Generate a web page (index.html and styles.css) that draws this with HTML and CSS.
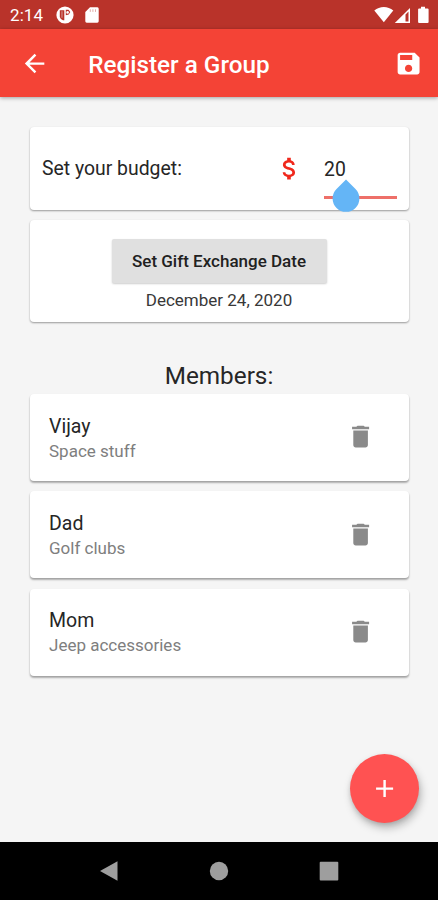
FILE: index.html
```html
<!DOCTYPE html>
<html lang="en">

<head>
    <meta charset="UTF-8" />
    <meta name="viewport" content="width=device-width, initial-scale=1.0" />
    <title>Register a Group</title>
    <link rel="stylesheet" href="styles.css">
</head>

<body>
    <div class="screen">
        <div class="status-bar">
            <span class="clock">2:14</span>
            <svg class="status-app" viewBox="0 0 18 18">
                <circle cx="9" cy="9" r="8.6" fill="#fff" />
                <path d="M3.800 4.200v6.800q.6 2.400 3.200 3.200h1.300V4.200zM9.800 3.800h2.700l1.800 2.200-1.600 2.600-2.900.6z" fill="#b9332a" />
                <path d="M5.200 5.200h1.500v6.500H5.200z" fill="#fff" opacity=".35" />
                <circle cx="11.600" cy="6.400" r="1.300" fill="#fff" />
            </svg>
            <svg class="status-sd" viewBox="0 0 14 16">
                <path d="M5 .3h7.400A1.400 1.400 0 0 1 13.700 1.700v12.600a1.400 1.400 0 0 1-1.400 1.400H1.700a1.400 1.400 0 0 1-1.400-1.400V5z" fill="#fff" />
                <path d="M5.300 2.300v2.600M7.900 2.300v2.600M10.500 2.300v2.600" stroke="#b9332a" stroke-width="1" opacity=".4" />
            </svg>
            <svg class="status-system" viewBox="0 0 56 18">
                <path d="M.3 4.500C5.600-.2 14-.2 19.300 4.500L9.800 16.300z" fill="#fff" />
                <path d="M20.800 17L36 2v15zM31.500 8.500v7h3v-10z" fill="#fff" fill-rule="evenodd" />
                <path d="M47 .8h4v1.700h2.500q1.100 0 1.100 1.100v12.300q0 1.100-1.100 1.100h-8.300q-1.100 0-1.100-1.100V3.600q0-1.100 1.100-1.100H47z" fill="#fff" />
            </svg>
        </div>

        <header class="app-bar">
            <svg class="icon" viewBox="0 0 24 24"><path d="M20 11H7.830l5.590-5.590L12 4l-8 8 8 8 1.410-1.410L7.830 13H20v-2z" /></svg>
            <h1>Register a Group</h1>
            <svg class="icon" viewBox="0 0 24 24"><path d="M17 3H5c-1.110 0-2 .9-2 2v14c0 1.100.89 2 2 2h14c1.100 0 2-.9 2-2V7l-4-4zm-5 16c-1.660 0-3-1.340-3-3s1.340-3 3-3 3 1.340 3 3-1.340 3-3 3zm3-10H5V5h10v4z" /></svg>
        </header>

        <main class="content">
            <section class="card budget">
                <span class="budget-label">Set your budget:</span>
                <svg class="icon dollar" viewBox="0 0 24 24"><path d="M11.800 10.900c-2.270-.59-3-1.200-3-2.150 0-1.090 1.010-1.850 2.700-1.850 1.780 0 2.440.85 2.500 2.100h2.210c-.07-1.720-1.120-3.300-3.210-3.810V3h-3v2.160c-1.940.42-3.500 1.680-3.500 3.610 0 2.310 1.910 3.460 4.700 4.130 2.500.6 3 1.480 3 2.410 0 .69-.49 1.790-2.700 1.790-2.060 0-2.870-.92-2.980-2.100h-2.200c.12 2.190 1.760 3.420 3.680 3.830V21h3v-2.150c1.950-.37 3.500-1.500 3.500-3.550 0-2.840-2.430-3.810-4.700-4.400z" /></svg>
                <div class="budget-field">
                    <span>20</span>
                    <svg class="cursor-handle" viewBox="0 0 28 33"><path d="M14 .5L23.500 10a13.400 13.400 0 1 1-19 0z" /></svg>
                </div>
            </section>

            <section class="card exchange">
                <button class="date-button">Set Gift Exchange Date</button>
                <p class="date">December 24, 2020</p>
            </section>

            <h2>Members:</h2>

            <div class="card member">
                <div class="member-info">
                    <h3>Vijay</h3>
                    <p>Space stuff</p>
                </div>
                <svg class="icon delete" viewBox="0 0 24 24"><path d="M6 19c0 1.100.9 2 2 2h8c1.100 0 2-.9 2-2V7H6v12zM19 4h-3.500l-1-1h-5l-1 1H5v2h14V4z" /></svg>
            </div>
            <div class="card member">
                <div class="member-info">
                    <h3>Dad</h3>
                    <p>Golf clubs</p>
                </div>
                <svg class="icon delete" viewBox="0 0 24 24"><path d="M6 19c0 1.100.9 2 2 2h8c1.100 0 2-.9 2-2V7H6v12zM19 4h-3.500l-1-1h-5l-1 1H5v2h14V4z" /></svg>
            </div>
            <div class="card member">
                <div class="member-info">
                    <h3>Mom</h3>
                    <p>Jeep accessories</p>
                </div>
                <svg class="icon delete" viewBox="0 0 24 24"><path d="M6 19c0 1.100.9 2 2 2h8c1.100 0 2-.9 2-2V7H6v12zM19 4h-3.500l-1-1h-5l-1 1H5v2h14V4z" /></svg>
            </div>
        </main>

        <button class="fab" aria-label="Add member">
            <svg class="icon" viewBox="0 0 24 24"><path d="M19 13h-6v6h-2v-6H5v-2h6V5h2v6h6v2z" /></svg>
        </button>

        <nav class="nav-bar">
            <svg viewBox="0 0 22 22"><path d="M19.500 1.300v19.400L2 11z" /></svg>
            <svg viewBox="0 0 22 22"><circle cx="11" cy="11" r="9.200" /></svg>
            <svg viewBox="0 0 22 22"><rect x="1.700" y="1.700" width="18.600" height="18.800" rx="1" /></svg>
        </nav>
    </div>
</body>

</html>
```

FILE: styles.css
```css
* {
    box-sizing: border-box;
}

body {
    font-family: Roboto, "Liberation Sans", sans-serif;
    margin: 0;
    background: #f5f5f5;
    color: #262626;
}

h1,
h2,
h3,
p {
    margin: 0;
    font-weight: 400;
}

button {
    border: 0;
    padding: 0;
    font-family: inherit;
}

.screen {
    position: relative;
    display: flex;
    flex-direction: column;
    height: 900px;
    overflow: hidden;
}

.icon {
    width: 29.2px;
    height: 29.2px;
    flex-shrink: 0;
    fill: #fff;
}

/* Top bars */
.status-bar {
    display: flex;
    align-items: center;
    height: 29px;
    padding: 1px 8px 0 10px;
    background: #b9332a;
}

.clock {
    width: 46px;
    color: #fff;
    font-size: 17px;
    letter-spacing: 0.1px;
}

.status-app {
    width: 18px;
    height: 18px;
    margin-right: 11px;
}

.status-sd {
    width: 14px;
    height: 16px;
}

.status-system {
    width: 56px;
    height: 18px;
    margin-left: auto;
}

.app-bar {
    display: flex;
    align-items: center;
    height: 68px;
    padding: 2px 14.5px 0 20px;
    background: #f44336;
    box-shadow: 0 1px 4px rgba(0, 0, 0, 0.35);
}

.app-bar h1 {
    flex: 1;
    margin-left: 39px;
    color: #fff;
    font-size: 24.3px;
    font-weight: 500;
}

/* Cards */
.content {
    flex: 1;
    padding: 30px 29px 0 30px;
}

.card {
    display: flex;
    margin-bottom: 10px;
    border-radius: 4px;
    background: #fff;
    box-shadow: 0 1px 2px rgba(0, 0, 0, 0.28), 0 1px 2px rgba(0, 0, 0, 0.12);
}

.budget {
    align-items: center;
    height: 83px;
    padding: 0 12px;
    font-size: 19.4px;
}

.budget-label {
    flex: 1;
}

.dollar {
    fill: #f0281c;
}

.budget-field {
    position: relative;
    width: 73px;
    height: 60px;
    margin-left: 20px;
    padding-top: 19px;
    border-bottom: 3px solid #ee7069;
    line-height: 23px;
}

.cursor-handle {
    position: absolute;
    left: 8px;
    top: 40px;
    width: 28px;
    height: 33px;
    fill: #64b5f6;
}

.exchange {
    flex-direction: column;
    align-items: center;
    height: 102px;
    padding-top: 19px;
}

.date-button {
    width: 215px;
    height: 44px;
    padding-right: 1px;
    border-radius: 2px;
    background: #e0e0e0;
    color: #212121;
    font-size: 17px;
    font-weight: 500;
    box-shadow: 0 1px 2px rgba(0, 0, 0, 0.2);
}

.date {
    margin-top: 7px;
    padding-right: 1px;
    color: #383838;
    font-size: 17px;
    line-height: 20px;
}

h2 {
    margin-top: 39px;
    padding-right: 1px;
    font-size: 24.3px;
    line-height: 29px;
    text-align: center;
}

/* Members */
.member {
    align-items: center;
    height: 87px;
    margin-bottom: 10.4px;
    padding: 0 34px 0 19px;
    box-shadow: 0 2px 2px rgba(0, 0, 0, 0.26), 0 1px 2px rgba(0, 0, 0, 0.14);
}

h2 + .member {
    margin-top: 4px;
}

.member-info {
    flex: 1;
}

.member h3 {
    padding-top: 1px;
    font-size: 19.5px;
    line-height: 26px;
}

.member p {
    color: #7e7e7e;
    font-size: 17px;
    line-height: 23px;
}

.delete {
    margin-bottom: 1px;
    fill: #8a8a8a;
}

/* Floating button and system navigation */
.fab {
    position: absolute;
    right: 19px;
    bottom: 77px;
    display: flex;
    align-items: center;
    justify-content: center;
    width: 69px;
    height: 69px;
    border-radius: 50%;
    background: #ff5252;
    box-shadow: 2px 5px 9px rgba(0, 0, 0, 0.25), 0 2px 4px rgba(0, 0, 0, 0.1);
}

.nav-bar {
    display: flex;
    align-items: center;
    justify-content: space-between;
    height: 58px;
    padding: 0 98px;
    background: #000;
}

.nav-bar svg {
    width: 22px;
    height: 22px;
    fill: #9e9e9e;
}
```
